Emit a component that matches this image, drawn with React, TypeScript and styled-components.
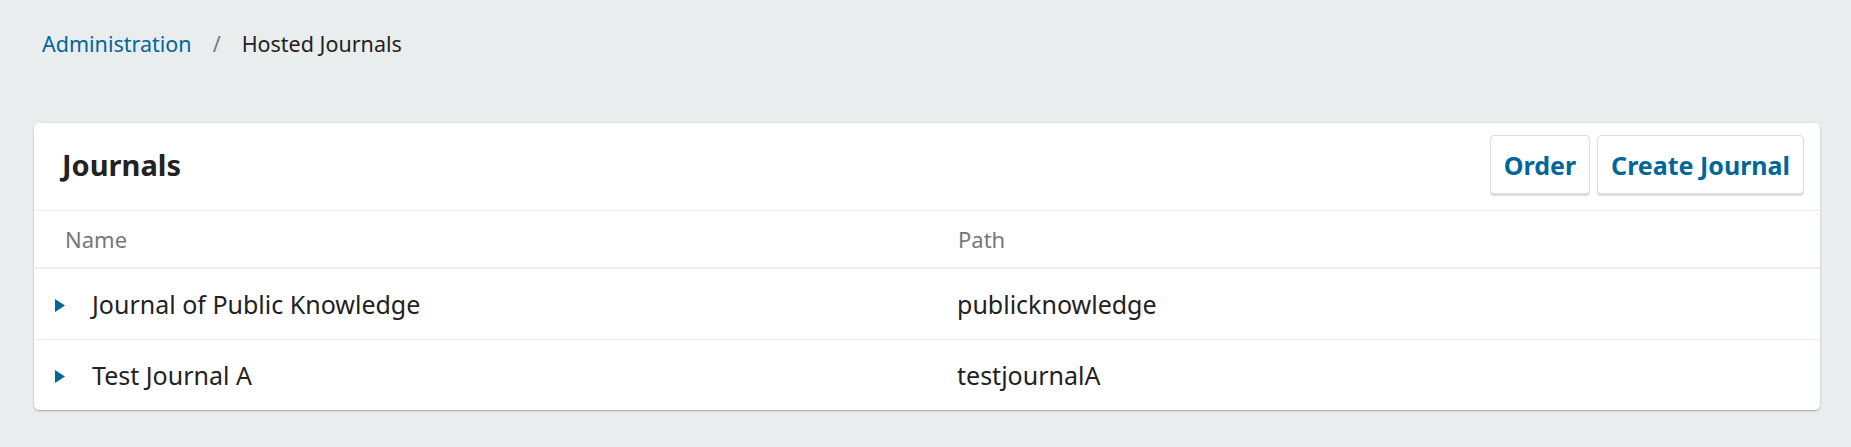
import React from "react";
import styled, { createGlobalStyle } from "styled-components";

const Global = createGlobalStyle`
  html, body { margin: 0; padding: 0; }
  body {
    background: #eaedee;
    font-family: "Noto Sans", "Open Sans", sans-serif;
    color: #222;
  }
`;

const Page = styled.div`
  padding: 26px 31px 38px 34px;
`;

const Breadcrumbs = styled.nav`
  display: flex;
  align-items: center;
  padding-left: 8px;
  font-size: 21.5px;
  line-height: 36px;
  margin-bottom: 61px;
`;

const Crumb = styled.a`
  color: #006798;
  text-decoration: none;
`;

const Sep = styled.span`
  color: #777;
  margin: 0 21px;
`;

const Current = styled.span`
  color: #222;
`;

const Card = styled.section`
  background: #fff;
  border-radius: 5px;
  box-shadow: 0 1px 2px rgba(0, 0, 0, 0.3);
  overflow: hidden;
`;

const Header = styled.header`
  display: flex;
  align-items: center;
  justify-content: space-between;
  padding: 12px 16px 16px 28px;
  border-bottom: 1px solid #eee;
`;

const Title = styled.h2`
  margin: 0;
  font-size: 29px;
  font-weight: 700;
  color: #222;
`;

const Actions = styled.div`
  display: flex;
  gap: 7px;
`;

const Button = styled.button`
  font-family: inherit;
  font-size: 25px;
  font-weight: 700;
  color: #006798;
  background: #fff;
  border: 1px solid #ddd;
  border-radius: 4px;
  box-shadow: 0 2px 0 #ddd;
  height: 59px;
  padding: 0 13px;
  cursor: pointer;
`;

const Table = styled.table`
  width: 100%;
  border-collapse: collapse;
  table-layout: fixed;
`;

const Th = styled.th`
  text-align: left;
  font-weight: 400;
  font-size: 22px;
  color: #777;
  height: 56px;
  padding: 0 0 0 31px;
  border-bottom: 2px solid #eee;
`;

const Tr = styled.tr`
  & + & td {
    border-top: 1px solid #eee;
  }
`;

const Td = styled.td`
  font-size: 25px;
  color: #222;
  height: 70px;
  padding: 0 0 0 30px;
  vertical-align: middle;
`;

const NameCell = styled.div`
  display: flex;
  align-items: center;
  margin-left: -9px;
`;

const Toggle = styled.span`
  display: flex;
  align-items: center;
  width: 10px;
  margin: 3px 27px 0 0;

  svg {
    display: block;
  }
`;

const Arrow = () => (
  <svg width="10" height="13" viewBox="0 0 10 13" aria-hidden="true">
    <polygon points="0,0 10,6.5 0,13" fill="#006798" />
  </svg>
);

const journals = [
  { name: "Journal of Public Knowledge", path: "publicknowledge" },
  { name: "Test Journal A", path: "testjournalA" },
];

export default function App() {
  return (
    <>
      <Global />
      <Page>
        <Breadcrumbs>
          <Crumb href="#">Administration</Crumb>
          <Sep>/</Sep>
          <Current>Hosted Journals</Current>
        </Breadcrumbs>
        <Card>
          <Header>
            <Title>Journals</Title>
            <Actions>
              <Button>Order</Button>
              <Button>Create Journal</Button>
            </Actions>
          </Header>
          <Table>
            <thead>
              <tr>
                <Th>Name</Th>
                <Th>Path</Th>
              </tr>
            </thead>
            <tbody>
              {journals.map((j) => (
                <Tr key={j.path}>
                  <Td>
                    <NameCell>
                      <Toggle>
                        <Arrow />
                      </Toggle>
                      {j.name}
                    </NameCell>
                  </Td>
                  <Td>{j.path}</Td>
                </Tr>
              ))}
            </tbody>
          </Table>
        </Card>
      </Page>
    </>
  );
}
